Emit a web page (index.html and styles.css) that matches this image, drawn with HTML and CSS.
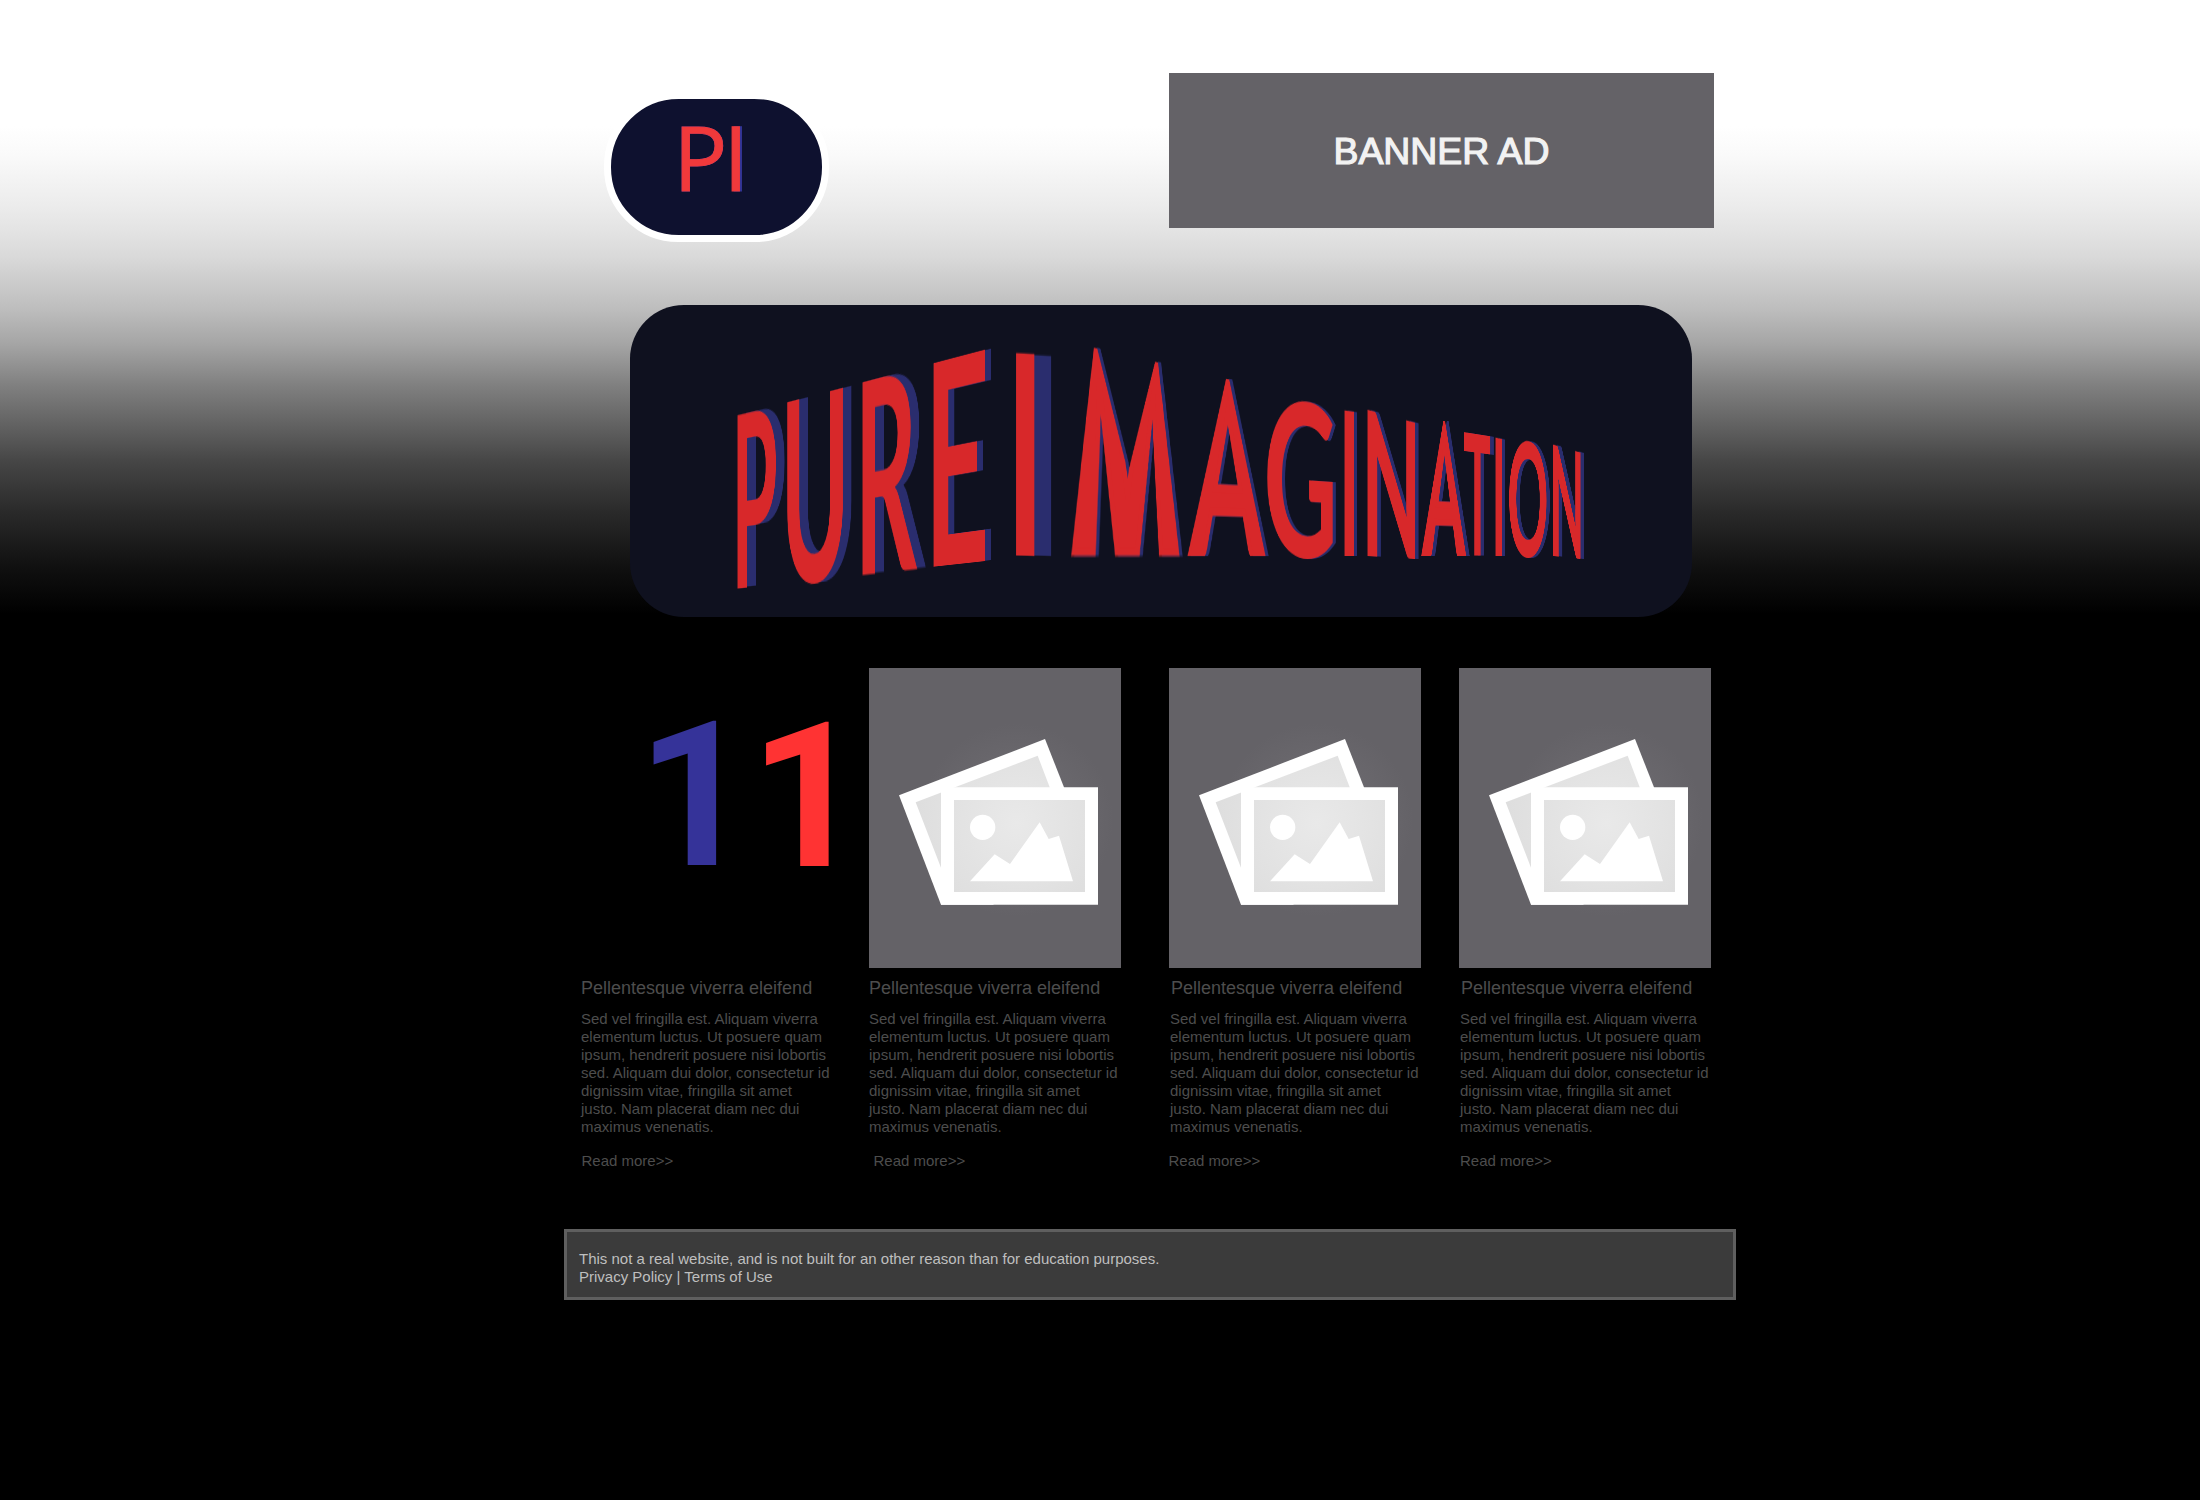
FILE: index.html
```html
<!DOCTYPE html>
<html lang="en">
<head>
<meta charset="utf-8">
<title>Pure Imagination</title>
<link rel="stylesheet" href="styles.css">
</head>
<body>
<svg class="defs" width="0" height="0" aria-hidden="true">
  <defs>
    <radialGradient id="paper" gradientUnits="userSpaceOnUse" cx="470" cy="370" r="300">
      <stop offset="0" stop-color="#e9e9e9"/><stop offset="1" stop-color="#dedede"/>
    </radialGradient>
    <radialGradient id="glow" gradientUnits="userSpaceOnUse" cx="470" cy="360" r="290">
      <stop offset="0" stop-color="#727075"/><stop offset="1" stop-color="#646267"/>
    </radialGradient>
    <symbol id="photos" viewBox="27 -96 756 900">
      <circle cx="470" cy="360" r="290" fill="url(#glow)"/>
      <path fill="#fff" d="M117 286 555 117 612 262 400 614H243Z"/>
      <path fill="url(#paper)" d="M167 307 533 167 570 264 287 300 243 503Z"/>
      <path fill="#fff" d="M243 262H714V614H243Z"/>
      <path fill="url(#paper)" d="M282 300H675V576H282Z"/>
      <circle cx="368" cy="382" r="38" fill="#fff"/>
      <path fill="#fff" d="M330 544 404 463 450 492 539 367 566 417 597 407 639 544Z"/>
    </symbol>
  </defs>
</svg>
<div class="page">
  <header class="header">
    <svg class="logo" viewBox="0 0 226 151" role="img" aria-label="PI">
      <rect class="logo-pill" x="3.5" y="3.5" width="218" height="143" rx="71"/>
      <text class="logo-text" x="69.2" y="99">P</text>
      <text class="logo-text logo-i" x="119.2" y="99">I</text>
    </svg>
    <div class="banner">BANNER AD</div>
  </header>

  <section class="hero"><h1 class="title" id="title" aria-label="Pure Imagination"></h1></section>

  <main class="cards">
    <article class="card">
      <div class="number"><span class="one one-blue">1</span><span class="one one-red">1</span></div>
      <h2>Pellentesque viverra eleifend</h2>
      <p>Sed vel fringilla est. Aliquam viverra<br>elementum luctus. Ut posuere quam<br>ipsum, hendrerit posuere nisi lobortis<br>sed. Aliquam dui dolor, consectetur id<br>dignissim vitae, fringilla sit amet<br>justo. Nam placerat diam nec dui<br>maximus venenatis.</p>
      <a class="more">Read more&gt;&gt;</a>
    </article>
    <article class="card card-2">
      <svg class="photo"><use href="#photos"/></svg>
      <h2>Pellentesque viverra eleifend</h2>
      <p>Sed vel fringilla est. Aliquam viverra<br>elementum luctus. Ut posuere quam<br>ipsum, hendrerit posuere nisi lobortis<br>sed. Aliquam dui dolor, consectetur id<br>dignissim vitae, fringilla sit amet<br>justo. Nam placerat diam nec dui<br>maximus venenatis.</p>
      <a class="more">Read more&gt;&gt;</a>
    </article>
    <article class="card card-3">
      <svg class="photo"><use href="#photos"/></svg>
      <h2>Pellentesque viverra eleifend</h2>
      <p>Sed vel fringilla est. Aliquam viverra<br>elementum luctus. Ut posuere quam<br>ipsum, hendrerit posuere nisi lobortis<br>sed. Aliquam dui dolor, consectetur id<br>dignissim vitae, fringilla sit amet<br>justo. Nam placerat diam nec dui<br>maximus venenatis.</p>
      <a class="more">Read more&gt;&gt;</a>
    </article>
    <article class="card card-4">
      <svg class="photo"><use href="#photos"/></svg>
      <h2>Pellentesque viverra eleifend</h2>
      <p>Sed vel fringilla est. Aliquam viverra<br>elementum luctus. Ut posuere quam<br>ipsum, hendrerit posuere nisi lobortis<br>sed. Aliquam dui dolor, consectetur id<br>dignissim vitae, fringilla sit amet<br>justo. Nam placerat diam nec dui<br>maximus venenatis.</p>
      <a class="more">Read more&gt;&gt;</a>
    </article>
  </main>

  <footer class="footer">This not a real website, and is not built for an other reason than for education purposes.<br>Privacy Policy | Terms of Use</footer>
</div>
<script src="title.js"></script>
</body>
</html>
```
FILE: styles.css
```css
* { box-sizing: border-box; }
body {
  margin: 0;
  min-height: 1500px;
  overflow: hidden;
  font-family: "Liberation Sans", Arial, sans-serif;
  background: #000 linear-gradient(#fff 126px, #fafafa 155px, #ececec 205px, #e3e3e3 232px, #d9d9d9 257px, #bebebe 308px, #a5a5a5 344px, #808080 385px, #5c5c5c 433px, #464646 461px, #2a2a2a 512px, #111 565px, #000 614px) no-repeat;
}
.defs { position: absolute; }
.page { width: 1172px; margin-left: 564px; padding-top: 73px; }
.header { display: flex; justify-content: space-between; align-items: flex-start; height: 232px; padding: 0 22px 0 40px; }
.logo { width: 226px; height: 151px; margin-top: 19px; }
.logo-pill { fill: #0e112f; stroke: #fff; stroke-width: 7px; }
.logo-text {
  font: 90px "Open Sans", sans-serif;
  fill: #f0393b; stroke: #f0393b; stroke-width: 0.9px;
  filter: drop-shadow(0.8px 0.6px 0 #343597);
}
.logo-i { filter: drop-shadow(2px 0.2px 0 #343597); }
.banner {
  display: flex; align-items: center; justify-content: center;
  width: 545px; height: 155px; padding-top: 2px;
  background: #646267; color: #f2f2f2;
  font-size: 37.4px; -webkit-text-stroke: 1.2px #f2f2f2;
}
.hero { width: 1062px; height: 312px; margin-left: 66px; border-radius: 54px; background: #0f111f; }
.title { position: relative; margin: 0 0 0 1px; height: 100%; }
.glyph {
  position: absolute; left: 0; top: 0;
  font-size: 200px; font-weight: 700; line-height: 200px;
  transform-origin: 0 0; white-space: pre;
  color: #d8282a;
}
.glyph-shade { color: #2a2d6e; }
.glyph-pointed { -webkit-text-stroke: 7px; }
.cards { display: grid; grid-template-columns: 288px 300px 290px 252px; padding: 51px 0 0 17px; }
.card { color: #4d4d4d; }
.photo, .number { display: block; width: 252px; height: 300px; }
.photo { background: #646267; }
.number { display: flex; padding: 56px 0 0 56px; }
.one { width: 112.5px; font: 700 202px/144px Roboto, sans-serif; }
.one-blue { color: #353399; }
.one-red { color: #f33; padding-top: 1px; }
h2 { margin: 9px 0 0; font-size: 18px; line-height: 22px; font-weight: 400; }
.card p { margin: 11px 0 0; font-size: 15px; line-height: 18px; white-space: nowrap; }
.more { display: block; margin: 16px 0 0 0.5px; font-size: 15px; line-height: 18px; }
.card-2 .more { margin-left: 4.5px; }
.card-3 h2, .card-4 h2 { margin-left: 2px; }
.card-3 p, .card-4 p { margin-left: 1px; }
.card-3 .more { margin-left: -0.5px; }
.card-4 .more { margin-left: 1px; }
.footer {
  height: 71px; margin-top: 59px; padding: 18px 12px;
  border: 3px solid #5f5f5f; background: #3b3b3b; color: #bfbfbf;
  font-size: 15px; line-height: 18px;
}
```
FILE: title.js
```js
// Each letter: character, left x, right x, then y of the top-left, top-right,
// bottom-right and bottom-left corners; shadow offset x, y; taper of the top edge.
const letters = [
  ["P", 106.5, 145.2, 110, 101, 280, 283.5, 8.6, -2],
  ["U", 156.2, 212.2, 97.3, 82.7, 276, 281.5, 8.6, -2],
  ["R", 231.5, 286.2, 77.3, 63, 264.7, 270.7, 8.6, -2],
  ["E", 302.5, 354.5, 57.7, 44, 256, 261.7, 6, -1],
  ["I", 385, 404, 47, 48, 251, 250.5, 16.7, 2],
  ["M", 440.2, 548.5, 41, 59, 251, 251, 3.1, 0, 15],
  ["A", 556.5, 634.5, 69, 79, 251, 251, 3.1, 0],
  ["G", 636, 702, 91, 100, 254, 254, 3.1, 0.5],
  ["I", 713.5, 723, 104.7, 106, 251, 251, 3.3, 0.5],
  ["N", 736.5, 784, 104, 117, 254, 251, 3.5, 0.5],
  ["A", 790.2, 835.2, 113, 119, 251, 251, 3.5, 0],
  ["T", 833.2, 859.5, 126.3, 130.5, 251, 251, 3.3, 0.5],
  ["I", 864.5, 871, 132, 133.5, 251, 251, 3.3, 0.5],
  ["O", 878, 915.5, 133.5, 138, 253, 253, 3.4, 0.5],
  ["N", 922, 949.5, 139, 147, 254, 251, 3.8, 0.5]
];

// Outlines that sharpen the apexes, as fractions of the letter's ink box.
const apexes = {
  A: [[0, 1], [0.48, 0], [0.52, 0], [1, 1]],
  M: [[0, 1], [0.09, 0], [0.13, 0], [0.5, 0.66], [0.87, 0], [0.91, 0], [1, 1]]
};

// Projective matrix taking the unit square to a quadrilateral.
function unitToQuad([x0, y0, x1, y1, x2, y2, x3, y3]) {
  const dx1 = x1 - x2, dx2 = x3 - x2, dx3 = x0 - x1 + x2 - x3;
  const dy1 = y1 - y2, dy2 = y3 - y2, dy3 = y0 - y1 + y2 - y3;
  const det = dx1 * dy2 - dx2 * dy1;
  const g = (dx3 * dy2 - dx2 * dy3) / det;
  const h = (dx1 * dy3 - dx3 * dy1) / det;
  return new DOMMatrix([
    x1 - x0 + g * x1, y1 - y0 + g * y1, 0, g,
    x3 - x0 + h * x3, y3 - y0 + h * y3, 0, h,
    0, 0, 1, 0,
    x0, y0, 0, 1
  ]);
}

const title = document.getElementById("title");
const pen = document.createElement("canvas").getContext("2d");

function place(char, quad, shade) {
  const family = char === "M" ? '"Open Sans", sans-serif' : "Lato, sans-serif";
  pen.font = "700 200px " + family;
  const m = pen.measureText(char);
  const ascent = m.fontBoundingBoxAscent, descent = m.fontBoundingBoxDescent;
  const baseline = 100 + (ascent - descent) / 2;
  const left = -m.actualBoundingBoxLeft;
  const top = baseline - m.actualBoundingBoxAscent;
  const width = m.actualBoundingBoxRight - left;
  const height = m.actualBoundingBoxAscent + m.actualBoundingBoxDescent;
  const span = document.createElement("span");
  span.className = shade ? "glyph glyph-shade" : "glyph";
  span.style.fontFamily = family;
  span.textContent = char;
  if (apexes[char]) {
    span.classList.add("glyph-pointed");
    const points = apexes[char].map(([x, y]) => `${left + x * width}px ${top + y * height}px`);
    span.style.clipPath = `polygon(${points.join(", ")})`;
  }
  span.style.transform = unitToQuad(quad).scale(1 / width, 1 / height).translate(-left, -top).toString();
  title.append(span);
}

for (const shade of [true, false]) {
  for (const [char, l, r, tl, tr, br, bl, ox, oy, t = 0] of letters) {
    const x = shade ? ox : 0, y = shade ? oy : 0;
    place(char, [l + t + x, tl + y, r - t + x, tr + y, r + x, br + Math.min(y, 0), l + x, bl + Math.min(y, 0)], shade);
  }
}
```
